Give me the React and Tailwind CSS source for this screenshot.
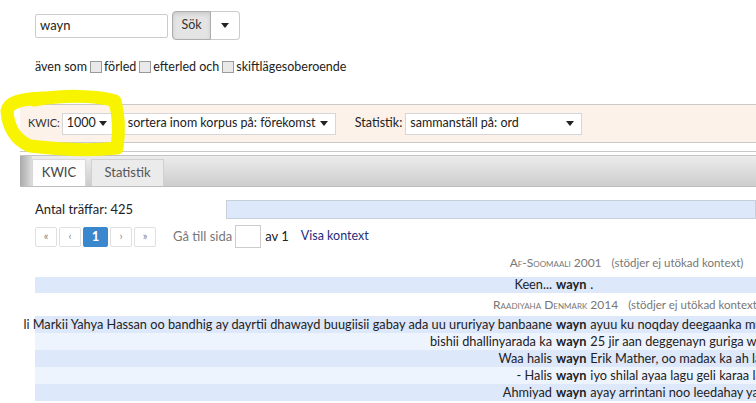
import React from "react";

const Caret = ({ className = "" }) => (
  <svg width="8" height="5" viewBox="0 0 8 5" className={`shrink-0 ${className}`}>
    <path d="M0 0H8L4 5Z" fill="#222" />
  </svg>
);

const Checkbox = () => (
  <span className="inline-block w-[12px] h-[12px] border border-[#9a9a9a] bg-[#e9e9e9] ml-[3px] mr-[2px] align-[-2px]" />
);

const Select = ({ w, children }) => (
  <div
    className={`flex items-center justify-between h-[22px] bg-white border border-[#d6d6d6] pl-[4px] pr-[7px] text-[12.5px] text-[#222] whitespace-nowrap ${w}`}
  >
    <span>{children}</span>
    <Caret />
  </div>
);

const PageBtn = ({ children, active, w = "w-[22px]" }) => (
  <div
    className={`flex items-center justify-center h-[20px] ${w} rounded-[2px] border ${
      active
        ? "bg-[#3b87cd] border-[#3b87cd] text-white font-bold text-[13px]"
        : "bg-white border-[#e0e0e0] text-[#888] text-[11px]"
    }`}
  >
    {children}
  </div>
);

const rows = [
  {
    l: "li Markii Yahya Hassan oo bandhig ay dayrtii dhawayd buugiisii gabay ada uu ururiyay banbaane",
    r: "ayuu ku noqday deegaanka mu",
  },
  { l: "bishii dhallinyarada ka", r: "25 jir aan deggenayn guriga wa" },
  { l: "Waa halis", r: "Erik Mather, oo madax ka ah la" },
  { l: "- Halis", r: "iyo shilal ayaa lagu geli karaa la" },
  { l: "Ahmiyad", r: "ayay arrintani noo leedahay ya" },
];

const KwicRow = ({ l, r, dark, h = "h-[17px]" }) => (
  <div className={`flex ${h} items-center whitespace-nowrap text-[12.75px] text-[#222] ${dark ? "bg-[#dde8fb]" : "bg-[#eef4fe]"}`}>
    <div className="flex justify-end w-[519px] shrink-0 pr-[2px]">
      <span className="shrink-0">{l}</span>
    </div>
    <div className="shrink-0 font-bold px-[2px]">wayn</div>
    <div className="shrink-0 pl-[2px]">{r}</div>
  </div>
);

const CorpusHeader = ({ name, h }) => (
  <div className={`flex ${h} items-center justify-center w-[1183px] text-[11.5px] text-[#777] whitespace-nowrap`}>
    <span className="[font-variant:small-caps] text-[12px]">{name}</span>
    <span className="ml-[10px]">(stödjer ej utökad kontext)</span>
  </div>
);

export default function App() {
  return (
    <div
      className="relative w-[756px] h-[403px] overflow-hidden bg-white text-[#333]"
      style={{ fontFamily: "Lato, 'Noto Sans', sans-serif" }}
    >
      {/* search row */}
      <div className="flex items-center pl-[35px] pt-[11px] h-[40px]">
        <div className="flex items-center w-[133px] h-[24px] border border-[#ccc] rounded-[2px] pl-[4px] text-[13px] text-[#222]">
          wayn
        </div>
        <div className="flex ml-[4px] h-[29px]">
          <div className="flex items-center justify-center w-[39px] bg-[#e4e4e4] border border-[#adadad] rounded-l-[4px] shadow-[inset_0_2px_4px_rgba(0,0,0,0.12)] text-[12.5px] text-[#333]">
            Sök
          </div>
          <div className="flex items-center justify-center w-[29px] bg-white border border-l-0 border-[#ccc] rounded-r-[4px]">
            <Caret />
          </div>
        </div>
      </div>

      {/* checkbox row */}
      <div className="pl-[35px] mt-[18px] h-[18px] leading-[18px] text-[12.5px] text-[#222] whitespace-nowrap">
        <span>även som</span>
        <Checkbox />
        <span>förled</span>
        <Checkbox />
        <span>efterled och</span>
        <Checkbox />
        <span>skiftlägesoberoende</span>
      </div>

      {/* options bar */}
      <div className="ml-[20px] mt-[28px] h-[39px] border-y border-[#c9c9c9] bg-[#fdf2ea] flex items-center pl-[8px] whitespace-nowrap">
        <span className="text-[11px] text-[#333] mr-[2px]">KWIC:</span>
        <Select w="w-[53px]">1000</Select>
        <div className="ml-[8px]">
          <Select w="w-[213px]">sortera inom korpus på: förekomst</Select>
        </div>
        <span className="ml-[19px] mr-[3px] text-[12.5px] text-[#222]">Statistik:</span>
        <Select w="w-[177px]">sammanställ på: ord</Select>
      </div>

      {/* separator */}
      <div className="ml-[20px] mt-[8px] border-t border-[#c9c9c9]" />

      {/* tab bar */}
      <div className="ml-[20px] mt-[3px] h-[32px] flex items-end border-t border-[#c4c4c4] border-b border-b-[#bdbdbd] bg-gradient-to-b from-[#ececec] to-[#cdcdcd]">
        <div className="w-[12px] h-full bg-gradient-to-r from-[#a9a9a9] to-[#dcdcdc]" />
        <div className="flex items-center justify-center w-[54px] h-[27px] bg-gradient-to-b from-[#fbfbfb] to-white text-[13px] text-[#444] border-t border-x border-[#d8d8d8]">
          KWIC
        </div>
        <div className="flex items-center justify-center ml-[5px] w-[73px] h-[27px] bg-[#ebebeb] border-t border-x border-[#d0d0d0] text-[13px] text-[#555]">
          Statistik
        </div>
      </div>

      {/* content */}
      <div className="pl-[35px]">
        <div className="flex items-center mt-[13px] h-[19px]">
          <span className="w-[191px] shrink-0 text-[13px] text-[#222]">Antal träffar: 425</span>
          <div className="flex-1 h-[19px] bg-[#dde8fb] border border-[#c6d0d6]" />
        </div>

        <div className="flex items-center mt-[6px] h-[23px] whitespace-nowrap">
          <div className="flex items-center gap-[2px]">
            <PageBtn>«</PageBtn>
            <PageBtn>‹</PageBtn>
            <PageBtn active w="w-[25px]">1</PageBtn>
            <PageBtn>›</PageBtn>
            <PageBtn>»</PageBtn>
          </div>
          <span className="ml-[17px] text-[13px] text-[#777]">Gå till sida</span>
          <div className="ml-[3px] w-[26px] h-[23px] border border-[#ccc] bg-white" />
          <span className="ml-[4px] text-[13px] text-[#222]">av 1</span>
          <span className="ml-[12px] text-[12.5px] text-[#1f2d7a]">Visa kontext</span>
        </div>

        <CorpusHeader name="Af-Soomaali 2001" h="h-[29px]" />
        <KwicRow l="Keen..." r="." dark h="h-[16px]" />
        <CorpusHeader name="Raadiyaha Denmark 2014" h="h-[23px]" />
        {rows.map((row, i) => (
          <KwicRow key={i} l={row.l} r={row.r} dark={i % 2 === 0} />
        ))}
      </div>

      {/* yellow annotation */}
      <svg className="absolute left-0 top-0 pointer-events-none" width="140" height="170" viewBox="0 0 140 170">
        <path
          d="M34 100 C62 95 96 95 115 101 C119 116 119 134 117 148 C90 151 55 149 30 146 C15 140 8 126 7 111 C9 102 20 99 44 98"
          fill="none"
          stroke="#f8f400"
          strokeWidth="13"
          strokeLinecap="round"
          strokeLinejoin="round"
        />
      </svg>
    </div>
  );
}
